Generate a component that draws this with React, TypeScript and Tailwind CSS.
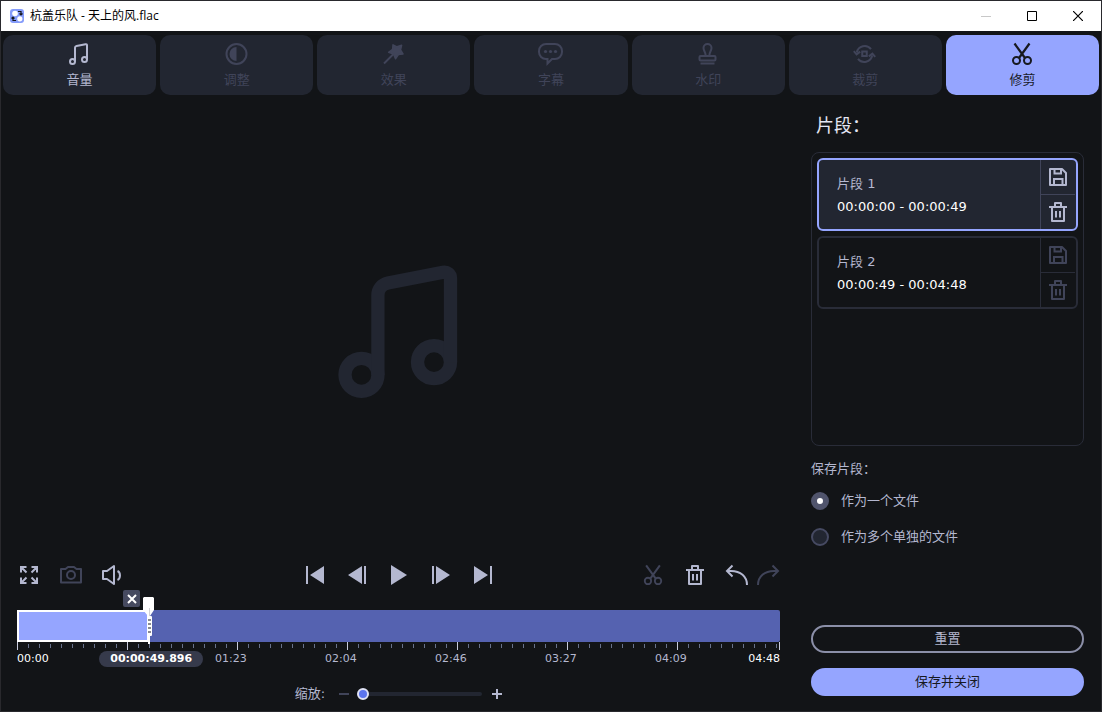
import { useState, type ReactNode } from "react";
import clsx from "clsx";

const DURATION = 288;
const TICK_SECONDS = 4.152;
const CUT_POSITION = 49.896;

interface IconProps {
  className?: string;
  children: ReactNode;
}

function Icon({ className = "size-6", children }: IconProps) {
  return (
    <svg
      viewBox="0 0 24 24"
      fill="none"
      stroke="currentColor"
      strokeWidth="2"
      className={clsx("shrink-0 overflow-visible", className)}
      aria-hidden="true"
    >
      {children}
    </svg>
  );
}

const NoteIcon = () => (
  <Icon>
    <circle cx="4.5" cy="19.5" r="2.5" />
    <circle cx="16.5" cy="17.5" r="2.5" />
    <path d="M7 19.5V5.8c0-1 .5-1.6 1.5-1.8l9-1.8c.9-.2 1.5.3 1.5 1.1v14.2" />
  </Icon>
);

const ContrastIcon = () => (
  <Icon>
    <circle cx="11.5" cy="12" r="10" />
    <path d="M11.5 5v14a7 7 0 0 1 0-14z" fill="currentColor" stroke="none" />
  </Icon>
);

const WandIcon = () => (
  <Icon>
    <path d="M2 21.5 13 10.5" />
    <path
      d="M11 2.8 15 4.8 19.6 3.3 18.5 8 21 12 16.4 12.6 13.5 16.8 11.5 12 6.6 10.3 10.6 7.3z"
      fill="currentColor"
      strokeWidth="1.5"
      strokeLinejoin="round"
    />
  </Icon>
);

const SubtitleIcon = () => (
  <Icon>
    <path d="M7 2h9a7 7 0 0 1 7 7v1a7 7 0 0 1-7 7h-3l-4.500 4.500V17H7a7 7 0 0 1-7-7V9a7 7 0 0 1 7-7z" />
    <g fill="currentColor" stroke="none">
      <circle cx="6.500" cy="9.500" r="1.600" />
      <circle cx="11.500" cy="9.500" r="1.600" />
      <circle cx="16.500" cy="9.500" r="1.600" />
    </g>
  </Icon>
);

const StampIcon = () => (
  <Icon>
    <path d="M9.500 14v-1.500C9.500 10 7.500 8.800 7.500 6a4 4 0 0 1 8 0c0 2.800-2 4-2 6.500V14" />
    <rect x="3.500" y="14" width="16" height="4.500" rx="1" />
    <path d="M4.500 21.500h14" />
  </Icon>
);

const CropIcon = () => (
  <Icon>
    <rect x="9.250" y="9.500" width="4.500" height="4.500" />
    <path d="M3.800 10.500A8 8 0 0 1 18 7.200" />
    <path d="M19.200 13.500A8 8 0 0 1 5 16.800" />
    <path d="M.8 9.200 3.600 12.300 7.200 9.600M22.200 14.800 19.400 11.700 15.800 14.400" />
  </Icon>
);

const ScissorsIcon = ({ className }: { className?: string }) => (
  <Icon className={className}>
    <path d="M4.500 1.500 15 16M19.500 1.500 9 16" strokeWidth="2.200" />
    <circle cx="6.500" cy="18.500" r="3.500" />
    <circle cx="17.500" cy="18.500" r="3.500" />
  </Icon>
);

const TrashIcon = () => (
  <Icon>
    <path d="M3 7h18M9 7V3h6v4M6 7v14h12V7M10 11v6.500M14 11v6.500" strokeLinejoin="round" />
  </Icon>
);

const SaveIcon = () => (
  <Icon>
    <path d="M4 4h12l4 4v12H4z" strokeLinejoin="round" />
    <path d="M8.500 4v4.500h6.500V4M8 20v-6h8.500v6" />
  </Icon>
);

const tabs = [
  { id: "volume", label: "音量", icon: <NoteIcon />, enabled: true },
  { id: "adjust", label: "调整", icon: <ContrastIcon />, enabled: false },
  { id: "effects", label: "效果", icon: <WandIcon />, enabled: false },
  { id: "subtitles", label: "字幕", icon: <SubtitleIcon />, enabled: false },
  { id: "watermark", label: "水印", icon: <StampIcon />, enabled: false },
  { id: "crop", label: "裁剪", icon: <CropIcon />, enabled: false },
  { id: "trim", label: "修剪", icon: <ScissorsIcon />, enabled: true },
];

const segments = [
  { id: 1, name: "片段 1", range: "00:00:00 - 00:00:49" },
  { id: 2, name: "片段 2", range: "00:00:49 - 00:04:48" },
];

function formatTime(seconds: number) {
  const m = Math.floor(seconds / 60);
  const s = Math.floor(seconds % 60);
  return `${String(m).padStart(2, "0")}:${String(s).padStart(2, "0")}`;
}

function TitleBar() {
  return (
    <header className="flex h-[30px] items-center bg-white pl-[9px] text-black">
      <svg viewBox="0 0 14 14" className="size-[14px] shrink-0" aria-hidden="true">
        <rect width="14" height="14" rx="3" fill="#849bfa" />
        <circle cx="5" cy="4.500" r="2.800" fill="#fff" />
        <circle cx="9.800" cy="9.800" r="2.600" fill="#fff" />
        <path d="M8 2.500h3v3M9.500 4.500l1.500 1.500 1.500-1.500M6 11.500H3v-3M1.500 9.500 3 8l1.500 1.500" fill="none" stroke="#15171c" strokeWidth="1.200" />
      </svg>
      <h1 className="ml-[6px] flex-1 font-['Open_Sans','Noto_Sans_CJK_SC',sans-serif] text-[12px] leading-5">
        杭盖乐队 - 天上的风.flac
      </h1>
      <button type="button" aria-label="最小化" className="flex h-full w-[46px] items-center justify-center text-[#c8c8c8]">
        <svg viewBox="0 0 10 10" className="size-[10px]" stroke="currentColor" shapeRendering="crispEdges">
          <path d="M0 5.500h10" />
        </svg>
      </button>
      <button type="button" aria-label="最大化" className="flex h-full w-[46px] items-center justify-center">
        <svg viewBox="0 0 10 10" className="size-[10px]" fill="none" stroke="currentColor">
          <path d="M.5.5h9v9h-9z" />
        </svg>
      </button>
      <button type="button" aria-label="关闭" className="flex h-full w-[46px] items-center justify-center">
        <svg viewBox="0 0 10 10" className="size-[10px]" stroke="currentColor" strokeWidth="1.200">
          <path d="m0 0 10 10M10 0 0 10" />
        </svg>
      </button>
    </header>
  );
}

function Toolbar() {
  const [active, setActive] = useState("trim");
  return (
    <nav className="grid grid-cols-7 gap-1 px-[2px] pt-1">
      {tabs.map((tab) => (
        <button
          key={tab.id}
          type="button"
          disabled={!tab.enabled}
          onClick={() => setActive(tab.id)}
          className={clsx(
            "flex h-[60px] flex-col items-center gap-1 rounded-[10px] pt-[7px]",
            active === tab.id
              ? "bg-[#95a5ff] text-[#17191f]"
              : tab.enabled
                ? "bg-[#222631] text-[#b4b8d0]"
                : "bg-[#222631] text-[#404459]"
          )}
        >
          {tab.icon}
          <span className="leading-5">{tab.label}</span>
        </button>
      ))}
    </nav>
  );
}

function ControlButton({ label, disabled = false, children }: { label: string; disabled?: boolean; children: ReactNode }) {
  return (
    <button
      type="button"
      aria-label={label}
      disabled={disabled}
      className="flex size-6 items-center justify-center text-[#b4b8d0] disabled:text-[#404459]"
    >
      {children}
    </button>
  );
}

function PlayerControls() {
  return (
    <div className="grid h-[30px] grid-cols-3 items-center">
      <div className="flex gap-[18px]">
        <ControlButton label="全屏">
          <Icon>
            <path d="M4 9.500V4h5.500M14.500 4H20v5.500M20 14.500V20h-5.500M9.500 20H4v-5.500M4 4l5.500 5.500M20 4l-5.500 5.500M20 20l-5.500-5.500M4 20l5.500-5.500" />
          </Icon>
        </ControlButton>
        <ControlButton label="截图" disabled>
          <Icon>
            <path d="M2 6h4.500L9 4h6l2.500 2H22v13.500H2z" strokeLinejoin="round" />
            <circle cx="12" cy="12" r="4" />
          </Icon>
        </ControlButton>
        <ControlButton label="静音">
          <Icon>
            <path d="M2 8h4l7-5v18l-7-5H2z" strokeLinejoin="round" />
            <path d="M16.500 8c3.300 1.500 3.300 7.500 0 9" />
          </Icon>
        </ControlButton>
      </div>

      <div className="flex justify-center gap-[18px] pl-px">
        <ControlButton label="上一片段">
          <Icon>
            <path d="M3 3h2v18H3zM21 3v18L7 12z" fill="currentColor" stroke="none" />
          </Icon>
        </ControlButton>
        <ControlButton label="上一帧">
          <Icon>
            <path d="M17 3v18L3 12zM19 3h2v18h-2z" fill="currentColor" stroke="none" />
          </Icon>
        </ControlButton>
        <ControlButton label="播放">
          <Icon>
            <path d="M4 2v20l16-10z" fill="currentColor" stroke="none" />
          </Icon>
        </ControlButton>
        <ControlButton label="下一帧">
          <Icon>
            <path d="M3 3h2v18H3zM7 3v18l14-9z" fill="currentColor" stroke="none" />
          </Icon>
        </ControlButton>
        <ControlButton label="下一片段">
          <Icon>
            <path d="M3 3v18l14-9zM19 3h2v18h-2z" fill="currentColor" stroke="none" />
          </Icon>
        </ControlButton>
      </div>

      <div className="flex justify-end gap-[18px]">
        <ControlButton label="分割" disabled>
          <ScissorsIcon className="size-[22px]" />
        </ControlButton>
        <ControlButton label="删除片段">
          <TrashIcon />
        </ControlButton>
        <div className="flex gap-[7px]">
          <ControlButton label="撤消">
            <Icon>
              <path d="M7.500 2.500 2 8l5.500 5.500M2 8h4c9.500 0 16 5.500 16 14" />
            </Icon>
          </ControlButton>
          <ControlButton label="重做" disabled>
            <Icon>
              <path d="M16.500 2.500 22 8l-5.500 5.500M22 8h-4C8.500 8 2 13.500 2 22" />
            </Icon>
          </ControlButton>
        </div>
      </div>
    </div>
  );
}

function Timeline() {
  const count = Math.floor(DURATION / TICK_SECONDS) + 1;
  const ticks = Array.from({ length: count }, (_, i) => i);
  const cut = `${(CUT_POSITION / DURATION) * 100}%`;

  return (
    <div className="relative mt-5">
      <div className="h-8 rounded-r-[2px] bg-[#5562b0]">
        <div className="h-full border-2 border-white bg-[#95a5ff]" style={{ width: cut }} />
      </div>

      <svg className="block h-[10px] w-full overflow-visible" shapeRendering="crispEdges" aria-hidden="true">
        {ticks.map((i) => (
          <rect
            key={i}
            x={`${((i * TICK_SECONDS) / DURATION) * 100}%`}
            y={i % 10 === 0 ? 0 : 2}
            width="1"
            height={i % 10 === 0 ? 8 : 4}
            fill={i % 10 === 0 ? "#c9ccdd" : "#68728c"}
          />
        ))}
        <rect x="99.870%" y="0" width="1" height="8" fill="#c9ccdd" />
      </svg>

      <div className="flex h-5 justify-between text-[11px] leading-[14px] text-white">
        <span>00:00</span>
        <span>{formatTime(DURATION)}</span>
      </div>
      {ticks
        .filter((i) => i % 10 === 0 && i > 10)
        .map((i) => (
          <span
            key={i}
            className="absolute top-[42px] -ml-[22px] text-[11px] leading-[14px] text-[#b4b8d0]"
            style={{ left: `${((i * TICK_SECONDS) / DURATION) * 100}%` }}
          >
            {formatTime(i * TICK_SECONDS)}
          </span>
        ))}

      {/* Cut marker */}
      <div className="absolute top-0 w-0" style={{ left: cut }}>
        <button
          type="button"
          aria-label="移除标记"
          className="absolute -top-5 right-[9px] flex size-[17px] items-center justify-center rounded-[2px] bg-[#464a60] text-white"
        >
          <svg viewBox="0 0 10 10" className="size-[10px]" stroke="currentColor" strokeWidth="2">
            <path d="m1 1 8 8M9 1 1 9" />
          </svg>
        </button>
        <svg viewBox="0 0 11 47" className="absolute -top-[13px] -left-[6px] h-[47px] w-[11px]" aria-hidden="true">
          <path d="M1 0h9l1 1v12l-4 6v28H5V19l-5-6V1z" fill="#fff" />
          <rect x="4" y="19" width="5" height="20" rx="1" fill="#fff" />
          <path d="M6.500 11v8" stroke="#d2d2d6" />
          <path d="M5 23h3M5 27h3M5 31h3M5 35h3" stroke="#8a8a90" strokeWidth="2" />
        </svg>
        <output className="absolute top-[41px] left-[2px] flex h-4 w-[104px] -translate-x-1/2 items-center justify-center rounded-full bg-[#363a4b] text-[11px] font-bold text-white">
          00:00:49.896
        </output>
      </div>
    </div>
  );
}

function ZoomControl() {
  const [zoom, setZoom] = useState(0);
  return (
    <div className="mt-3 flex h-5 items-center justify-center text-[#b4b8d0]">
      <label htmlFor="zoom" className="leading-5">缩放:</label>
      <button type="button" aria-label="缩小" disabled={zoom === 0} onClick={() => setZoom(zoom - 10)} className="ml-[14px] disabled:text-[#404459]">
        <svg viewBox="0 0 10 10" className="size-[10px]" stroke="currentColor" strokeWidth="2">
          <path d="M0 5h10" />
        </svg>
      </button>
      <input
        id="zoom"
        type="range"
        min={0}
        max={100}
        value={zoom}
        onChange={(e) => setZoom(Number(e.target.value))}
        className="mr-[10px] ml-2 h-1 w-[125px] appearance-none rounded-full bg-[#222631] [&::-webkit-slider-thumb]:size-3 [&::-webkit-slider-thumb]:appearance-none [&::-webkit-slider-thumb]:rounded-full [&::-webkit-slider-thumb]:border-2 [&::-webkit-slider-thumb]:border-[#dfe2f5] [&::-webkit-slider-thumb]:bg-[#5b74ee]"
      />
      <button type="button" aria-label="放大" onClick={() => setZoom(Math.min(100, zoom + 10))}>
        <svg viewBox="0 0 10 10" className="size-[10px]" stroke="currentColor" strokeWidth="2">
          <path d="M0 5h10M5 0v10" />
        </svg>
      </button>
    </div>
  );
}

function SegmentPanel() {
  const [selected, setSelected] = useState(1);
  const [saveMode, setSaveMode] = useState("single");

  const modes = [
    { id: "single", label: "作为一个文件" },
    { id: "multiple", label: "作为多个单独的文件" },
  ];

  return (
    <aside className="flex w-[273px] shrink-0 flex-col pt-[19px] pb-[15px]">
      <h2 className="pl-[5px] text-[18px] leading-6 text-[#e4e6f2]">片段：</h2>

      <ul className="mt-[14px] min-h-0 flex-1 space-y-[5px] rounded-lg border border-[#292c38] p-[5px]">
        {segments.map((seg) => {
          const isSelected = seg.id === selected;
          return (
            <li
              key={seg.id}
              onClick={() => setSelected(seg.id)}
              className={clsx(
                "flex h-[73px] overflow-hidden rounded-md border-2",
                isSelected ? "border-[#95a5ff] bg-[#222631]" : "border-[#292c38]"
              )}
            >
              <div className="flex flex-1 flex-col justify-center pl-[18px] leading-[23px]">
                <p className="text-[#b4b8d0]">{seg.name}</p>
                <p className="text-white">{seg.range}</p>
              </div>
              <div
                className={clsx(
                  "grid w-9 grid-rows-2 divide-y border-l pr-px",
                  isSelected
                    ? "divide-[#404459] border-[#404459] text-[#b4b8d0]"
                    : "divide-[#292c38] border-[#292c38] text-[#404459]"
                )}
              >
                <button type="button" aria-label="保存片段" className="flex items-center justify-center">
                  <SaveIcon />
                </button>
                <button type="button" aria-label="删除片段" className="flex items-center justify-center">
                  <TrashIcon />
                </button>
              </div>
            </li>
          );
        })}
      </ul>

      <fieldset className="mt-[9px] text-[#b4b8d0]">
        <legend className="leading-7">保存片段：</legend>
        {modes.map((mode) => (
          <label key={mode.id} className="flex h-9 items-center gap-3">
            <input
              type="radio"
              name="save-mode"
              checked={saveMode === mode.id}
              onChange={() => setSaveMode(mode.id)}
              className="size-[18px] appearance-none rounded-full border-2 border-[#464a62] bg-[#222631] checked:border-[6px] checked:border-[#50546c] checked:bg-white"
            />
            {mode.label}
          </label>
        ))}
      </fieldset>

      <button type="button" className="mt-[70px] h-7 rounded-full border-2 border-[#8b8fa8] text-[#b4b8d0]">
        重置
      </button>
      <button type="button" className="mt-[15px] h-7 rounded-full bg-[#95a5ff] text-[#17191f]">
        保存并关闭
      </button>
    </aside>
  );
}

export default function App() {
  return (
    <div className="flex h-screen min-h-[600px] flex-col border border-[#29292d] bg-[#121417] font-['DejaVu_Sans','Noto_Sans_CJK_SC',sans-serif] text-[13px]">
      <TitleBar />
      <Toolbar />
      <main className="flex min-h-0 flex-1 gap-[31px] pr-[17px] pl-4">
        <section className="flex min-w-0 flex-1 flex-col pb-[7px]">
          <div className="flex min-h-0 flex-1 items-center justify-center pt-2">
            <svg viewBox="18.500 15.500 121 134" className="h-[134px] w-[121px]" fill="none" stroke="#222631" strokeWidth="13.300" aria-hidden="true">
              <circle cx="42" cy="125.300" r="16.500" />
              <circle cx="114.500" cy="112.600" r="16.500" />
              <path d="M58.400 125.500V46a12.500 12.500 0 0 1 10-12.500L123.500 22.800a6 6 0 0 1 7.500 6V113" />
            </svg>
          </div>
          <PlayerControls />
          <Timeline />
          <ZoomControl />
        </section>
        <SegmentPanel />
      </main>
    </div>
  );
}
